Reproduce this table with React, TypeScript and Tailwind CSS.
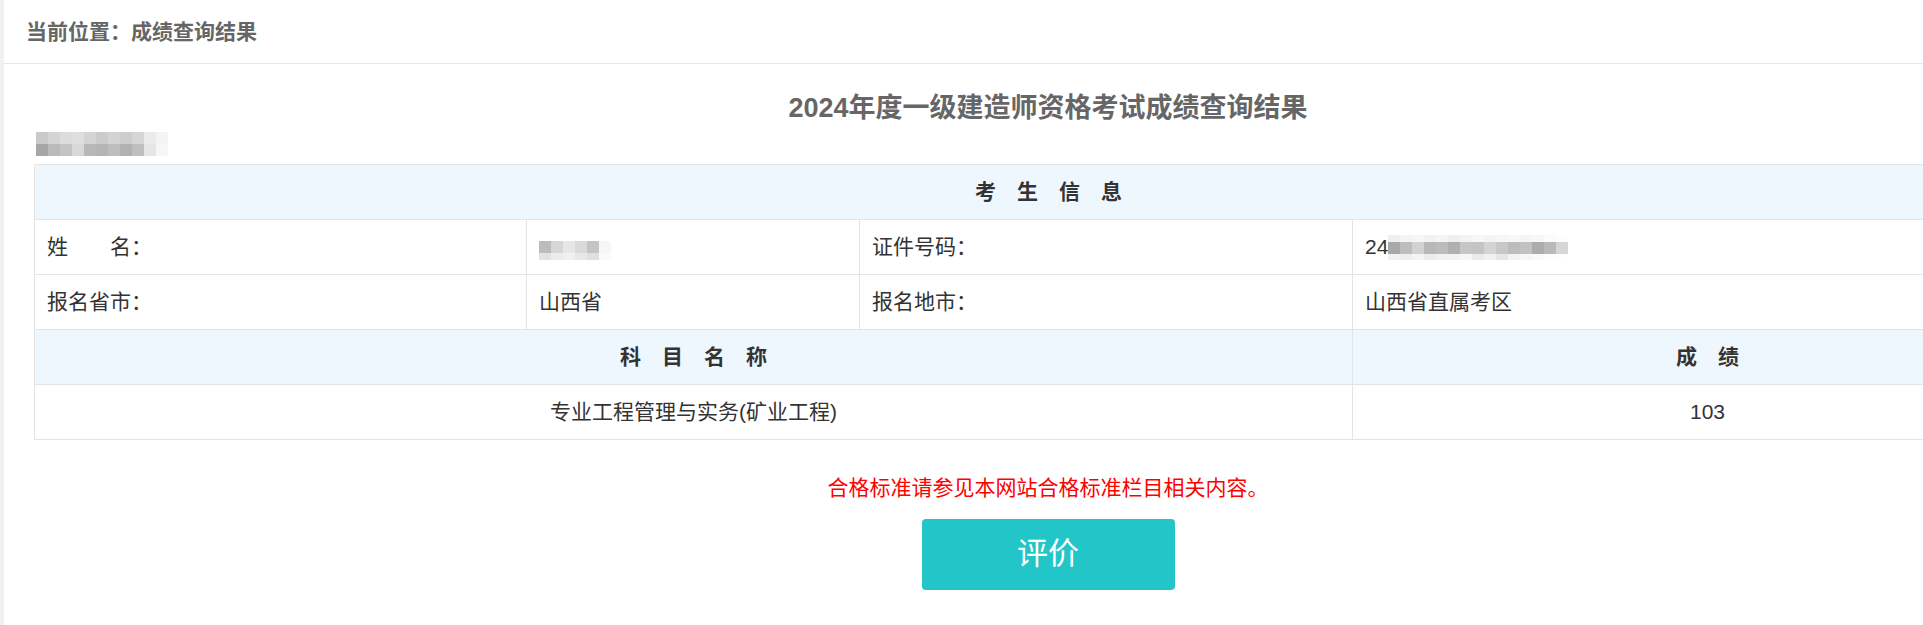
import React from 'react';

// mosaic blocks used where the original page is pixelated
type Row = { h: string; cells: string[] };

const nameRows: Row[] = [
  { h: 'h-[12px]', cells: ['bg-[#c9c9c9]', 'bg-[#d4d4d4]', 'bg-[#dcdcdc]', 'bg-[#dedede]', 'bg-[#d4d4d4]', 'bg-[#cbcbcb]', 'bg-[#d3d3d3]', 'bg-[#cdcdcd]', 'bg-[#d6d6d6]', 'bg-[#ebebeb]', 'bg-[#f4f4f4]'] },
  { h: 'h-[12px]', cells: ['bg-[#a6a6a6]', 'bg-[#bababa]', 'bg-[#c4c4c4]', 'bg-[#d8d8d8]', 'bg-[#b8b8b8]', 'bg-[#b4b4b4]', 'bg-[#bdbdbd]', 'bg-[#b1b1b1]', 'bg-[#bfbfbf]', 'bg-[#e6e6e6]', 'bg-[#f6f6f6]'] },
];

const cellNameRows: Row[] = [
  { h: 'h-[12px]', cells: ['bg-[#bcbcbc]', 'bg-[#d6d6d6]', 'bg-[#e6e6e6]', 'bg-[#dadada]', 'bg-[#c4c4c4]', 'bg-[#f6f6f6]'] },
  { h: 'h-[7px]', cells: ['bg-[#e2e2e2]', 'bg-[#ececec]', 'bg-[#f0f0f0]', 'bg-[#e8e8e8]', 'bg-[#e0e0e0]', 'bg-[#fafafa]'] },
];

const idRows: Row[] = [
  { h: 'h-[7px]', cells: ['bg-[#f0f0f0]', 'bg-[#f4f4f4]', 'bg-[#f6f6f6]', 'bg-[#f2f2f2]', 'bg-[#f5f5f5]', 'bg-[#efefef]', 'bg-[#f3f3f3]', 'bg-[#f7f7f7]', 'bg-[#f4f4f4]', 'bg-[#f6f6f6]', 'bg-[#f8f8f8]', 'bg-[#f5f5f5]', 'bg-[#f7f7f7]', 'bg-[#fbfbfb]', 'bg-[#fdfdfd]'] },
  { h: 'h-[12px]', cells: ['bg-[#a9a9a9]', 'bg-[#bdbdbd]', 'bg-[#d2d2d2]', 'bg-[#b8b8b8]', 'bg-[#bcbcbc]', 'bg-[#b0b0b0]', 'bg-[#c6c6c6]', 'bg-[#c4c4c4]', 'bg-[#d4d4d4]', 'bg-[#c8c8c8]', 'bg-[#bdbdbd]', 'bg-[#c2c2c2]', 'bg-[#acacac]', 'bg-[#b9b9b9]', 'bg-[#d6d6d6]'] },
  { h: 'h-[6px]', cells: ['bg-[#f2f2f2]', 'bg-[#eeeeee]', 'bg-[#f4f4f4]', 'bg-[#ececec]', 'bg-[#f0f0f0]', 'bg-[#f2f2f2]', 'bg-[#f6f6f6]', 'bg-[#eaeaea]', 'bg-[#f1f1f1]', 'bg-[#e6e6e6]', 'bg-[#f3f3f3]', 'bg-[#f7f7f7]', 'bg-[#fafafa]', 'bg-[#fdfdfd]', 'bg-[#fefefe]'] },
];

const Mosaic: React.FC<{ rows: Row[] }> = ({ rows }) => (
  <div className="flex flex-col">
    {rows.map((r, ri) => (
      <div key={ri} className="flex">
        {r.cells.map((c, i) => <div key={i} className={`${r.h} w-[12px] ${c}`} />)}
      </div>
    ))}
  </div>
);

const Spaced: React.FC<{ chars: string[] }> = ({ chars }) => (
  <div className="flex justify-center gap-[21px] font-bold text-[#333]">
    {chars.map((c) => <span key={c}>{c}</span>)}
  </div>
);

const td = 'border border-[#e4e4e4] px-[12px] align-middle';
const th = 'border border-[#e4e4e4] bg-[#eef6fe] align-middle';

export default function App() {
  return (
    <div className="flex min-h-screen w-full overflow-hidden bg-white font-['Liberation_Sans','Noto_Sans_CJK_SC',sans-serif]">
      <div className="w-[4px] shrink-0 bg-[#f0f0f0]" />
      <div className="min-w-0 flex-1">
        <div className="flex h-[64px] items-center border-b border-[#e6e6e6] pl-[22px] text-[21px] font-bold text-[#666]">
          当前位置：成绩查询结果
        </div>

        <div className="ml-[30px] w-[2028px]">
          <h1 className="mt-[26px] text-center text-[27px] leading-[36px] font-bold text-[#666]">
            2024年度一级建造师资格考试成绩查询结果
          </h1>

          <div className="mt-[6px] ml-[2px] h-[24px] w-fit bg-[#fafafa]">
            <Mosaic rows={nameRows} />
          </div>

          <table className="mt-[8px] w-[2028px] table-fixed border-collapse text-[21px] text-[#333]">
            <colgroup>
              <col className="w-[492px]" />
              <col className="w-[333px]" />
              <col className="w-[493px]" />
              <col className="w-[710px]" />
            </colgroup>
            <tbody>
              <tr className="h-[55px]">
                <td colSpan={4} className={th}>
                  <Spaced chars={['考', '生', '信', '息']} />
                </td>
              </tr>
              <tr className="h-[55px]">
                <td className={td}>姓　　名：</td>
                <td className={td}>
                  <div className="mt-[6px] w-fit">
                    <Mosaic rows={cellNameRows} />
                  </div>
                </td>
                <td className={td}>证件号码：</td>
                <td className={td}>
                  <div className="flex items-center">
                    <span>24</span>
                    <Mosaic rows={idRows} />
                  </div>
                </td>
              </tr>
              <tr className="h-[55px]">
                <td className={td}>报名省市：</td>
                <td className={td}>山西省</td>
                <td className={td}>报名地市：</td>
                <td className={td}>山西省直属考区</td>
              </tr>
              <tr className="h-[55px]">
                <td colSpan={3} className={th}>
                  <Spaced chars={['科', '目', '名', '称']} />
                </td>
                <td className={th}>
                  <Spaced chars={['成', '绩']} />
                </td>
              </tr>
              <tr className="h-[55px]">
                <td colSpan={3} className={`${td} text-center`}>专业工程管理与实务(矿业工程)</td>
                <td className={`${td} text-center`}>103</td>
              </tr>
            </tbody>
          </table>

          <p className="mt-[34px] text-center text-[21px] leading-[28px] text-[#ff0000]">
            合格标准请参见本网站合格标准栏目相关内容。
          </p>

          <button className="mx-auto mt-[17px] flex h-[71px] w-[253px] items-center justify-center rounded-[4px] bg-[#22c6c9] text-[31px] text-white">
            评价
          </button>
        </div>
      </div>
    </div>
  );
}
